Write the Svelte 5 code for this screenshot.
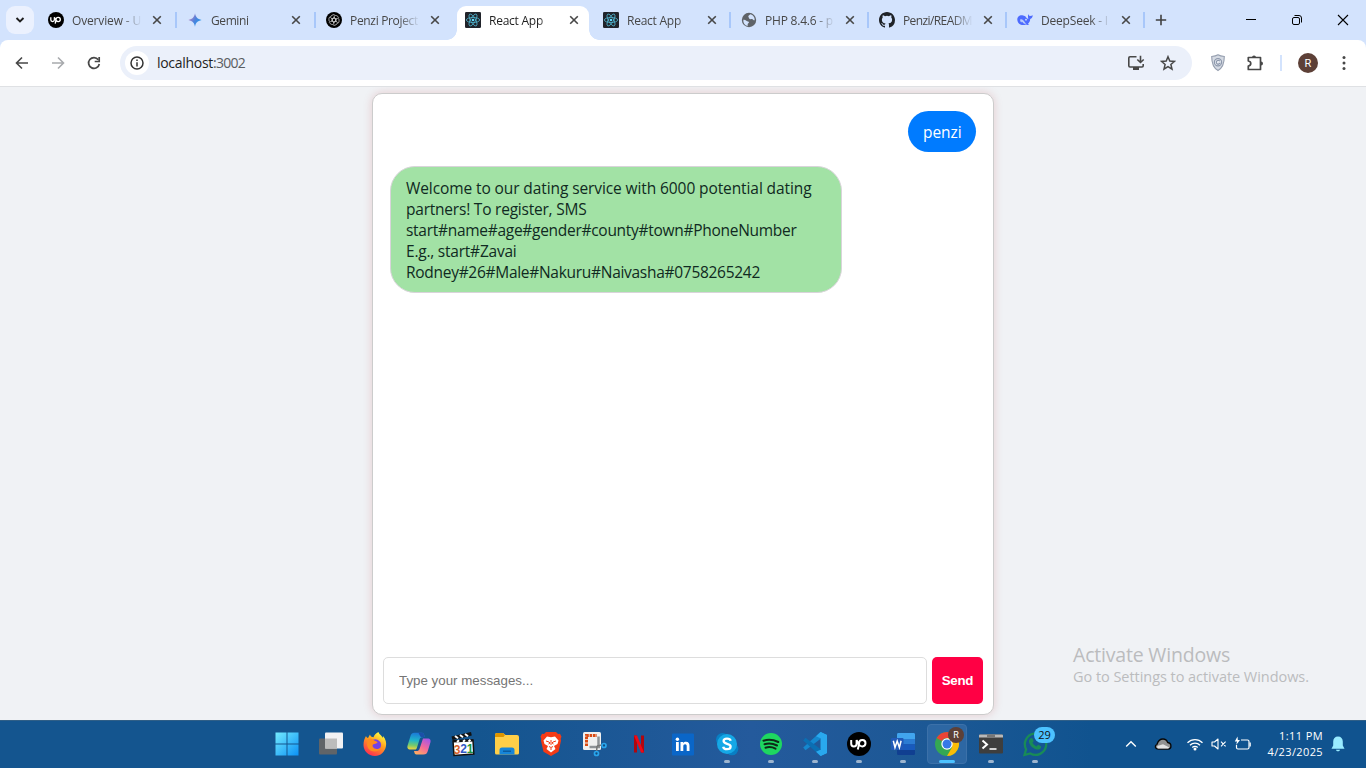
<script>
  const tabs = [
    { icon: 'up', title: 'Overview - U', w: 69 },
    { icon: 'gemini', title: 'Gemini', w: 37.5 },
    { icon: 'gpt', title: 'Penzi Project', w: 68 },
    { icon: 'react', title: 'React App', w: 54, active: true },
    { icon: 'react', title: 'React App', w: 54 },
    { icon: 'globe', title: 'PHP 8.4.6 - p', w: 68 },
    { icon: 'github', title: 'Penzi/READM', w: 69 },
    { icon: 'deepseek', title: 'DeepSeek - I', w: 67 }
  ];
  const lines = [
    ['Welcome to our dating service with 6000 potential dating', 405.5],
    ['partners! To register, SMS', 180.5],
    ['start#name#age#gender#county#town#PhoneNumber', 390.5],
    ['E.g., start#Zavai', 110.5],
    ['Rodney#26#Male#Nakuru#Naivasha#0758265242', 354]
  ];
  const apps = [
    { icon: 'start' }, { icon: 'tasks' }, { icon: 'firefox' }, { icon: 'copilot' }, { icon: 'mpc' },
    { icon: 'folder' }, { icon: 'brave' }, { icon: 'snip' }, { icon: 'netflix' }, { icon: 'linkedin' },
    { icon: 'skype', open: true }, { icon: 'spotify', open: true }, { icon: 'vscode', open: true },
    { icon: 'up', open: true }, { icon: 'word', open: true }, { icon: 'chrome', open: true, active: true },
    { icon: 'terminal', open: true }, { icon: 'whatsapp', open: true }
  ];

  // Spaces the letters of a single line so that it fills the given width.
  function fit(node, width) {
    const apply = () => {
      node.style.letterSpacing = '0px';
      const n = node.textContent.length;
      node.style.letterSpacing = (width - node.getBoundingClientRect().width) / n + 'px';
    };
    apply();
    document.fonts.ready.then(apply);
  }
</script>

{#snippet glyph(name, size)}
  <svg class="glyph" width={size} height={size} viewBox="0 0 24 24">
    {#if name === 'up'}
      <circle cx="12" cy="12" r="12" fill="#000" />
      <path d="M4.200 8v3.800a2.700 2.700 0 0 0 5.400 0V8c1 2.800 2.700 6.400 5.600 6.400a3.200 3.200 0 1 0-3.100-3.400c0 2-1 4.500-1.300 6.500" fill="none" stroke="#fff" stroke-width="2" />
    {:else if name === 'gemini'}
      <defs><linearGradient id="gem" x1="0" x2="1" y1=".2" y2=".8"><stop offset=".1" stop-color="#b884c4" /><stop offset=".5" stop-color="#4c82dc" /><stop offset="1" stop-color="#1ba1f0" /></linearGradient></defs>
      <path d="M12 2c1.200 6 3.500 8.500 10 10-6.500 1.500-8.800 4-10 10-1.200-6-3.500-8.500-10-10C8.500 10.500 10.800 8 12 2z" fill="url(#gem)" />
    {:else if name === 'gpt'}
      <circle cx="12" cy="12" r="12" fill="#000" />
      <g fill="none" stroke="#ddd" stroke-width="1.2">
        {#each [0, 60, 120, 180, 240, 300] as a}
          <path d="M12 8.300V6.500a3 3 0 0 1 5-2l2 1.200a3 3 0 0 1 1 3.200M12 8.300l3.300 1.900v5" transform="rotate({a} 12 12) translate(1.700 1.900) scale(.86)" />
        {/each}
      </g>
    {:else if name === 'react'}
      <rect width="24" height="24" rx="2" fill="#20232a" />
      <g fill="none" stroke="#4fb3cc" stroke-width="1.2">
        <ellipse cx="12" cy="12" rx="10" ry="3.800" />
        <ellipse cx="12" cy="12" rx="10" ry="3.800" transform="rotate(60 12 12)" />
        <ellipse cx="12" cy="12" rx="10" ry="3.800" transform="rotate(120 12 12)" />
      </g>
      <circle cx="12" cy="12" r="2" fill="#61dafb" />
    {:else if name === 'globe'}
      <circle cx="12" cy="12" r="10.800" fill="#5f6368" />
      <path d="M3.500 11.500c2 0 3 .5 4.500 1.500s4 1 4 2.500-2 1.500-2 3v2.500A9 9 0 0 1 3.500 11.500zM14 3.500c-1 1.500-3 1.500-3 3s1 2 1 3 2 1.500 4 1 2 2 4.500 2A9 9 0 0 0 14 3.500z" fill="#d3e3fd" />
    {:else if name === 'github'}
      <path fill="#1f2328" d="M12 0C5.370 0 0 5.370 0 12c0 5.300 3.440 9.800 8.210 11.390.6.110.79-.26.79-.58v-2.230c-3.340.73-4.030-1.420-4.030-1.420-.55-1.390-1.330-1.760-1.330-1.760-1.090-.74.080-.73.080-.73 1.210.09 1.840 1.240 1.840 1.240 1.070 1.830 2.810 1.300 3.490 1 .11-.78.420-1.310.76-1.610-2.670-.3-5.470-1.330-5.470-5.930 0-1.310.47-2.380 1.240-3.220-.13-.3-.54-1.520.11-3.180 0 0 1.010-.32 3.300 1.230a11.500 11.500 0 0 1 6 0c2.300-1.550 3.300-1.230 3.300-1.230.66 1.660.250 2.880.12 3.180.77.84 1.230 1.910 1.230 3.220 0 4.610-2.800 5.620-5.480 5.920.43.370.82 1.100.82 2.220v3.290c0 .32.190.69.800.58A12 12 0 0 0 24 12C24 5.370 18.630 0 12 0z" />
    {:else if name === 'deepseek'}
      <path d="M.500 12C0 7 4 4.500 8 5c2 .3 3 1.300 4.500 1.500 1.200 2 2 3 4.500 4-.8-3-.5-5.500-.3-7.500 1 2.500 2 3 3.300 3 1.500 0 2-.8 3.700-1-.2 3-1.700 5-3.900 5.500 0 4-2 6-3.300 7 .5.800 1.500.7 2 1-2 1.700-4 .8-5 .2C7 21 1 18 .5 12z" fill="#4d6bfe" />
      <path d="M5 11c3-1 5 1.500 6.500 4 1 1.500 2 2 2.500 2.500-4 1-5-2-6.500-3-.8 0-1 .8-.4 1.600C5 15 4.300 13 5 11z" fill="#b9cdfc" />
      <circle cx="13.500" cy="11.500" r="1.300" fill="#d3e3fd" />
    {:else if name === 'start'}
      <defs><linearGradient id="win" x1="0" x2="1" y1="0" y2="1"><stop stop-color="#73eaff" /><stop offset="1" stop-color="#0b91f5" /></linearGradient></defs>
      <path d="M.500.500h11v11H.500zM12.500.500h11v11h-11zM.500 12.500h11v11H.500zM12.500 12.500h11v11h-11z" fill="url(#win)" />
    {:else if name === 'tasks'}
      <rect y="6.500" width="18" height="16" rx="1" fill="#606468" />
      <rect x="6" y=".5" width="18" height="16" rx="1" fill="#f1f1f3" />
      <path d="M6 6.500h12v10H6z" fill="#bcbcbc" />
    {:else if name === 'firefox'}
      <defs><linearGradient id="ff" x1=".8" x2=".25" y1="0" y2="1"><stop offset=".1" stop-color="#fff23c" /><stop offset=".45" stop-color="#ff9d1c" /><stop offset="1" stop-color="#ff2855" /></linearGradient></defs>
      <path d="M3 4c.3 1.300 1 1.500 2 2l2-3.500c.5 2 1.500 2.500 3.500 2.800C11 3 13 1 15.500 0c.5 2.500 3 3 4.500 6V4c3 3.500 3.500 7 3 10-1 6-5.500 10-11 10C5 24 .5 18.500.500 13c0-4 1.200-7 2.500-9z" fill="url(#ff)" />
      <circle cx="12.300" cy="13" r="5.800" fill="#7542e5" />
      <path d="M5 7c2-1.500 5 0 7 2 1.500.5 2.500.8 2.500 1.500-1 1.500-3 1-4.500 2-1 1.200-.3 3 1.500 4 3 1.200 4-.3 6-.3-1 2.300-3 3.300-6 3.300C7 19.500 4 16 4 12z" fill="#ff8b20" />
    {:else if name === 'copilot'}
      <defs>
        <linearGradient id="co1" x1=".4" x2=".3" y1="0" y2="1"><stop stop-color="#1b79d8" /><stop offset=".45" stop-color="#20b6c9" /><stop offset=".75" stop-color="#76ca6c" /><stop offset="1" stop-color="#f3d53c" /></linearGradient>
        <linearGradient id="co2" x1=".8" x2=".2" y1="0" y2="1"><stop stop-color="#a456e8" /><stop offset=".5" stop-color="#f2699b" /><stop offset="1" stop-color="#ffad60" /></linearGradient>
      </defs>
      <path d="M16 6.500h4.500c3 0 3.500 2 2.900 4l-2.600 8.500c-.7 2.500-1.700 3.500-4.500 3.500H9.500c-1.500 0-2-1-2.500-3.500h2.500c1.500 0 2.500-.5 3-2z" fill="url(#co2)" />
      <path d="M8 17.500H3.500c-3 0-3.500-2-2.900-4L3.200 5C4 2 5 .8 7.500.8H15c1.500 0 2 1 2.500 4L15 5.500c-1.500 0-2 .5-2.500 2L10 15.500c-.5 1.500-.8 2-2 2z" fill="url(#co1)" />
      <path d="M11.500.8H15c1.500 0 2 1 2.500 4L15 5.500c-1.500 0-2-1.500-3.500-4.700z" fill="#1c4fa8" />
    {:else if name === 'mpc'}
      <path d="M2 9l20-1 .8 14L3 23.500z" fill="#fff" stroke="#111" stroke-width="1.500" />
      <path d="M.500 4.500L20 0l.8 3.500L1.500 8zM2 8l20-.8.2 2.300L2 10.500z" fill="#111" />
      <path d="M4 4l3 2.300M9 3l3 2.300M14 2l3 2.200M6 10l2-1.700M12 9.700l2-1.700M17.500 9.500l2-1.700" stroke="#fff" stroke-width="2" />
      <text class="num" x="2.800" y="21.500" fill="#d9622b">3</text><text class="num" x="9.200" y="21.200" fill="#3158c5">2</text><text class="num" x="15.700" y="20.900" fill="#1d963a">1</text>
    {:else if name === 'folder'}
      <path d="M0 3a2 2 0 0 1 2-2h6l2.500 2H22a2 2 0 0 1 2 2v16a1.500 1.500 0 0 1-1.500 1.500h-21A1.500 1.500 0 0 1 0 21z" fill="#ffcf48" />
      <path d="M0 5V3a2 2 0 0 1 2-2h6l2 2-1.500 2z" fill="#dd9500" />
      <path d="M4.500 22.500V18a2.500 2.500 0 0 1 2.500-2.500h10a2.500 2.500 0 0 1 2.500 2.500v4.500z" fill="#1685d8" />
      <path d="M8 18.500h8v1.500H8z" fill="#0b5b9f" />
    {:else if name === 'brave'}
      <path d="M7 0h10l2 2 2-.3 1.500 3-.8 2 .3 2-2.500 11L12 24l-7.500-4.300L2 8.700l.3-2-.8-2L3 1.700 5 2z" fill="#f43b16" />
      <path d="M8 4.500l4 .8 4-.8 3.500 4-1 3.500-3.500 2 1.500 3-4.500 3.500L7.500 17 9 14l-3.500-2-1-3.500z" fill="#fff" />
      <path d="M7 9l3 1 1 1-1.500 1M17 9l-3 1-1 1 1.500 1M12 8v5m-2 1.500l2 1 2-1M12 16v2" stroke="#f43b16" stroke-width="1" fill="none" />
    {:else if name === 'snip'}
      <rect x="0" y="0" width="18" height="18" rx="1.500" fill="#f0f0f0" />
      <path d="M3.500 14V3.500H14" fill="none" stroke="#d84a13" stroke-width="3" stroke-dasharray="2.600 .8" />
      <path d="M15.500 4.500V15M6.500 15H17" stroke="#8e9296" stroke-width="2.500" />
      <path d="M14 14l7-1.500M14 14l-.5 7" stroke="#777" stroke-width="1.500" />
      <circle cx="21" cy="13.500" r="2" fill="#124d83" stroke="#28a4ec" stroke-width="1.700" /><circle cx="13.500" cy="21.500" r="2" fill="#124d83" stroke="#28a4ec" stroke-width="1.700" />
    {:else if name === 'netflix'}
      <path d="M7 3.500h3v17H7zM14 3.500h3v17h-3z" fill="#b0070f" /><path d="M7 3.500h3l7 17h-3z" fill="#ef0915" />
    {:else if name === 'linkedin'}
      <rect x="1" y="1.500" width="22" height="22" rx="1" fill="#0a66c8" />
      <path d="M5 10h2.800v9H5zM9.500 10h2.700v1.200c.6-1 1.500-1.400 2.700-1.400 2.800 0 3.600 1.700 3.600 4.200v5h-2.800v-4.500c0-1.200-.2-2.200-1.500-2.200s-1.900.9-1.900 2.200V19H9.500z" fill="#fff" /><circle cx="6.400" cy="7.300" r="1.700" fill="#fff" />
    {:else if name === 'skype'}
      <circle cx="7.500" cy="7.500" r="6.500" fill="#087fc4" /><circle cx="17" cy="17" r="6.300" fill="#087fc4" /><circle cx="12" cy="12" r="10" fill="#15a8e6" />
      <path d="M15.700 8.800c-.4-1.600-2-2.200-3.700-2.200-2 0-3.400 1-3.400 2.500 0 3.600 7 1.800 7 5.400 0 1.700-1.500 2.700-3.600 2.700-2 0-3.500-.8-3.800-2.500" fill="none" stroke="#fff" stroke-width="2.300" />
    {:else if name === 'spotify'}
      <circle cx="12" cy="12" r="11" fill="#1ed760" />
      <path d="M4.500 8.700c4.500-1.500 10-1 14.800 1.300M5.500 12.300c4-1.200 8.600-.7 12.500 1.200M6.500 15.700c3.300-1 7-.6 10 1" fill="none" stroke="#0e2a18" stroke-width="2" stroke-linecap="round" />
    {:else if name === 'vscode'}
      <path d="M17.500 0L24 3v18l-6.500 3z" fill="#29a8ee" /><path d="M17.500 0L.2 15.500l2.300 2.700L18 6.500z" fill="#1588cf" /><path d="M17.500 24L.2 8.500l2.300-2.700L18 17.500z" fill="#0b6fb3" /><path d="M17.500 0L13 4.200l5 2.300v11l-5 2.300 4.500 4.200L24 21V3z" fill="#29a8ee" />
    {:else if name === 'word'}
      <rect x="6" y="1" width="18" height="22" rx="1.300" fill="#103f91" /><path d="M6 2.300A1.300 1.300 0 0 1 7.300 1h15.400A1.300 1.300 0 0 1 24 2.300V7H6z" fill="#41a5ee" /><path d="M6 7h18v5.500H6z" fill="#2b7cd3" /><path d="M6 12.500h18V18H6z" fill="#185abd" />
      <rect y="6" width="12.500" height="12" rx="1" fill="#2059b8" /><path d="M2.300 8.700L4 15.500l2.200-6.500 2.200 6.500 1.700-6.800" fill="none" stroke="#fff" stroke-width="1.500" />
    {:else if name === 'chrome'}
      <circle cx="12" cy="12" r="12" fill="#34a853" /><path d="M12 6h10.400A12 12 0 0 1 12 24l5.200-9z" fill="#fbbc05" /><path d="M1.600 6A12 12 0 0 1 12 0a12 12 0 0 1 10.400 6H12a6 6 0 0 0-6 5.500z" fill="#ea4335" /><path d="M1.600 6l5.200 9 3-2-3-4z" fill="#34a853" />
      <circle cx="12" cy="12" r="5.700" fill="#fff" /><circle cx="12" cy="12" r="4.500" fill="#3679e8" />
    {:else if name === 'terminal'}
      <rect y="2.500" width="24" height="19" rx="1" fill="#3e3e3e" /><path d="M0 5.500v-2a1 1 0 0 1 1-1h22a1 1 0 0 1 1 1v2z" fill="#b9b9b9" /><path d="M8 2.500h8v3H8z" fill="#777" />
      <path d="M3.500 8.500l4.500 4-4.500 4" fill="none" stroke="#fff" stroke-width="2" /><path d="M10.500 17h7" stroke="#eee" stroke-width="1.700" />
    {:else if name === 'whatsapp'}
      <path d="M1.500 23l1.600-5.800A10.700 10.700 0 1 1 7.300 21.500z" fill="none" stroke="#198b57" stroke-width="2.300" /><path d="M7.500 6.500c1.500-1 2.200 0 3 2.300.3 1-.8 1.400-1 2 1 2 2.500 3 4 3.600.8-.3 1.200-2 2.200-1.500 2 1 2.800 1.300 2.300 2.600-1 2.500-3.600 2.500-6 1.500-3-1.300-4.800-3.600-5.800-6-.6-1.700-.2-3.500 1.300-4.500z" fill="#198b57" />
    {/if}
  </svg>
{/snippet}

<div class="screen">
  <header class="tabstrip">
    <button class="search" aria-label="Search tabs"><svg width="10" height="8" viewBox="0 0 10 8"><path d="M1.500 2L5 5.500 8.500 2" fill="none" stroke="#1f1f1f" stroke-width="1.900" /></svg></button>
    <div class="tabs">
      {#each tabs as tab, i}
        <div class="tab" class:active={tab.active} class:line={i > 0 && i !== 3 && i !== 4}>
          {@render glyph(tab.icon, 16)}
          <div class="title"><span use:fit={tab.w}>{tab.title}</span></div>
          <svg class="close" width="10" height="10" viewBox="0 0 10 10"><path d="M1.200 1.200l7.600 7.600M8.800 1.200L1.200 8.800" stroke="#474747" stroke-width="1.600" /></svg>
        </div>
      {/each}
    </div>
    <svg class="plus" width="12" height="12" viewBox="0 0 12 12"><path d="M6 .800v10.400M.800 6h10.400" stroke="#404040" stroke-width="1.600" /></svg>
    <div class="window">
      <svg width="12" height="12" viewBox="0 0 12 12"><path d="M1 5.500h10" stroke="#000" /></svg>
      <svg width="12" height="12" viewBox="0 0 12 12"><rect x="1.500" y="3.500" width="7" height="7" rx="1.500" fill="none" stroke="#000" /><path d="M3.500 1.500H8A2.500 2.500 0 0 1 10.500 4v4.500" fill="none" stroke="#000" /></svg>
      <svg width="12" height="12" viewBox="0 0 12 12"><path d="M1 1l10 10M11 1L1 11" stroke="#000" stroke-width="1.100" /></svg>
    </div>
  </header>

  <nav class="toolbar">
    <div class="nav">
      <svg width="16" height="16" viewBox="0 0 16 16"><path d="M14 8H3M8 2.500L2.500 8 8 13.500" fill="none" stroke="#474747" stroke-width="1.600" /></svg>
      <svg width="16" height="16" viewBox="0 0 16 16"><path d="M2 8h11M8 2.500L13.500 8 8 13.500" fill="none" stroke="#a8aaad" stroke-width="1.600" /></svg>
      <svg width="16" height="16" viewBox="0 0 16 16"><path d="M12.300 4.700A5.400 5.400 0 1 0 13.300 9" fill="none" stroke="#474747" stroke-width="1.700" /><path d="M13.200 2v4.500H8.700" fill="none" stroke="#474747" stroke-width="1.700" /></svg>
    </div>
    <div class="omnibox">
      <span class="info"><svg width="14" height="14" viewBox="0 0 14 14"><circle cx="7" cy="7" r="6" fill="none" stroke="#333" stroke-width="1.500" /><path d="M7 6.200v4.300M7 3.500v1.500" stroke="#333" stroke-width="1.500" /></svg></span>
      <div class="url"><span use:fit={56}>localhost</span><span class="port" use:fit={32}>:3002</span></div>
      <svg class="install" width="18" height="16" viewBox="0 0 18 16"><path d="M9.500 1.800H3a1.200 1.200 0 0 0-1.200 1.200v7.800A1.200 1.200 0 0 0 3 12h12a1.200 1.200 0 0 0 1.200-1.200V9" fill="none" stroke="#474747" stroke-width="1.600" /><path d="M6 12h6v3H6z" fill="#474747" /><path d="M13.500.8v6.500M10.300 4.500l3.200 3 3.200-3" fill="none" stroke="#474747" stroke-width="1.600" /></svg>
      <svg width="16" height="16" viewBox="0 0 16 16"><path d="M8 1.700l1.800 4.300 4.700.4-3.600 3.100 1.100 4.600L8 11.600l-4 2.500 1.100-4.600-3.600-3.100 4.700-.4z" fill="none" stroke="#474747" stroke-width="1.500" /></svg>
    </div>
    <div class="extras">
      <svg width="16" height="18" viewBox="0 0 16 18"><path d="M8 .800c2 1.200 4 1.500 6.300 1.700 0 6-.8 11-6.300 14C2.500 13.500 1.700 8.500 1.700 2.500 4 2.300 6 2 8 .800z" fill="#d5dae3" stroke="#969faf" stroke-width="1.100" /><circle cx="8" cy="8.300" r="3.600" fill="#eef1f6" stroke="#8d98ac" stroke-width="1.200" /><path d="M10 7.300A2 2 0 1 0 10 9.300H8.500" fill="none" stroke="#8d98ac" stroke-width="1.200" /></svg>
      <svg width="18" height="18" viewBox="0 0 18 18"><path d="M2.300 3.500h12.200v12H2.300V12c3.300-.5 3.300-4.500 0-5z" fill="none" stroke="#474747" stroke-width="1.700" stroke-linejoin="round" /><path d="M6 3.500a2 2 0 0 1 4 0zM15 7.500a2 2 0 0 1 0 4z" fill="#474747" /></svg>
      <i></i>
      <b>R</b>
      <svg width="4" height="16" viewBox="0 0 4 16"><g fill="#474747"><circle cx="2" cy="2.500" r="1.500" /><circle cx="2" cy="8" r="1.500" /><circle cx="2" cy="13.500" r="1.500" /></g></svg>
    </div>
  </nav>

  <main>
    <section class="chat">
      <div class="messages">
        <div class="bubble user"><span use:fit={38.5}>penzi</span></div>
        <div class="bubble bot">
          {#each lines as [text, width]}<div><span use:fit={width}>{text}</span></div>{/each}
        </div>
      </div>
      <form onsubmit={(e) => e.preventDefault()}>
        <input type="text" placeholder="Type your messages..." />
        <button><span use:fit={31.5}>Send</span></button>
      </form>
    </section>
    <aside class="watermark">
      <div class="big"><span use:fit={157}>Activate Windows</span></div>
      <div><span use:fit={236}>Go to Settings to activate Windows.</span></div>
    </aside>
  </main>

  <footer>
    <div class="apps">
      {#each apps as app}
        <div class="app" class:open={app.open} class:current={app.active}>
          {@render glyph(app.icon, 24)}
          {#if app.icon === 'chrome'}<span class="profile">R</span>{/if}
          {#if app.icon === 'whatsapp'}<span class="count">29</span>{/if}
        </div>
      {/each}
    </div>
    <div class="tray">
      <svg width="12" height="12" viewBox="0 0 12 12"><path d="M1.200 8.500L6 3.800l4.800 4.700" fill="none" stroke="#fff" stroke-width="1.400" /></svg>
      <svg class="cloud" width="18" height="14" viewBox="0 0 18 14"><path d="M4 12.200C1 12 .300 8.500 3 7.300 4 4 6 2 9 2c2.500 0 4 1.500 4.700 3.500C18 6 18 12 14 12.200z" fill="#929292" stroke="#080808" stroke-width="1.300" /><path d="M3.800 11.500C2.500 10.500 3 8.500 5 8.500l4-1.200 6 3c0 1-.5 1.200-1.500 1.200z" fill="#e4e4e4" /></svg>
      <svg class="wifi" width="18" height="14" viewBox="0 0 18 14"><g fill="none" stroke="#fff" stroke-width="1.300"><path d="M1.500 5.700a10.500 10.500 0 0 1 15 0M4 8.200a7 7 0 0 1 10 0M6.300 10.500a3.800 3.800 0 0 1 5.400 0" /></g><circle cx="9" cy="12" r="1.500" fill="#fff" /></svg>
      <svg class="sound" width="16" height="14" viewBox="0 0 16 14"><path d="M1 5v4h2.500L7 12V2L3.500 5zM10 4.700l4.600 4.600M14.600 4.700L10 9.300" fill="none" stroke="#fff" stroke-width="1.100" stroke-linejoin="round" /></svg>
      <svg class="battery" width="18" height="16" viewBox="0 0 18 16"><path d="M7 4h6.500A1.500 1.500 0 0 1 15 5.500v6a1.500 1.500 0 0 1-1.500 1.500H4a1.500 1.500 0 0 1-1.500-1.500V9" fill="none" stroke="#fff" stroke-width="1.200" /><path d="M15.500 6.500h1.300v4h-1.300zM3.500.500L.800 5.500H3L2.200 9 6 4H3.800z" fill="#fff" /></svg>
      <div class="clock"><div><span use:fit={44}>1:11 PM</span></div><div><span use:fit={55.500}>4/23/2025</span></div></div>
      <svg class="bell" width="14" height="16" viewBox="0 0 14 16"><path d="M7 .500c3 0 4.800 2 4.800 5v4l1.700 3.300H.500L2.200 9.500v-4c0-3 1.800-5 4.800-5zM5 13.700h4c-.5 2-3.500 2-4 0z" fill="#99ebff" /></svg>
    </div>
  </footer>
</div>

<style>
  :global(body) { margin: 0; overflow: hidden; }
  * { box-sizing: border-box; }
  svg { display: block; flex: none; }
  span { white-space: nowrap; }
  .screen { width: 1366px; height: 768px; display: flex; flex-direction: column; font-family: "Open Sans", "Noto Sans", sans-serif; background: #f0f2f5; }

  .tabstrip { height: 40px; flex: none; display: flex; align-items: center; background: #d3e3fd; padding-left: 6px; }
  .search { width: 28px; height: 28px; border: 0; padding: 0; border-radius: 9px; background: #ebf1fe; display: grid; place-items: center; }
  .tabs { display: flex; margin-left: 6px; align-self: stretch; }
  .tab { width: 138px; display: flex; align-items: center; padding-left: 8px; position: relative; }
  .tab:nth-child(-n+3) { width: 139px; }
  .tab.line::before { content: ""; position: absolute; left: -4px; top: 12px; width: 2px; height: 16px; background: #a8c7fa; }
  .tab:last-child::after { content: ""; position: absolute; right: 2px; top: 12px; width: 2px; height: 16px; background: #a8c7fa; }
  .tab > :global(*) { z-index: 1; }
  .tab.active::before { content: ""; position: absolute; left: 0; top: 6px; width: 132px; height: 34px; border-radius: 9px 9px 0 0; background: #fff; z-index: 0; }
  .tab.active::after { content: ""; position: absolute; left: -10px; bottom: 0; width: 152px; height: 10px; z-index: 0;
    background: radial-gradient(circle at 0 0, transparent 9.500px, #fff 10px) left / 10px 10px no-repeat, radial-gradient(circle at 100% 0, transparent 9.500px, #fff 10px) right / 10px 10px no-repeat; }
  .title { width: 70px; margin-left: 8px; overflow: hidden; font-size: 12px; line-height: 20px; color: #474747; mask-image: linear-gradient(90deg, #000 70%, transparent 100%); padding-top: 2px; }
  .active .title { color: #1f1f1f; }
  .close { margin-left: 10px; }
  .plus { margin-left: 8px; }
  .window { display: flex; gap: 34px; margin-left: auto; padding-right: 17px; }

  .toolbar { height: 47px; flex: none; display: flex; align-items: center; background: linear-gradient(#d3e3fd, #d3e3fd) top / 100% 10px no-repeat, #fff; border-bottom: 1px solid #dfe1e4; position: relative; isolation: isolate; }
  .toolbar::before { content: ""; position: absolute; inset: 0; background: #fff; border-radius: 8px 8px 0 0; z-index: -1; }
  .nav { display: flex; gap: 20px; padding-left: 14px; width: 120px; }
  .omnibox { width: 1072px; height: 34px; border-radius: 17px; background: #ebf0fa; display: flex; align-items: center; padding: 0 16px 0 5px; }
  .info { width: 24px; height: 24px; border-radius: 50%; background: #fff; display: grid; place-items: center; }
  .url { flex: 1; margin-left: 8px; font-size: 14px; color: #1f1f1f; line-height: 20px; }
  .port { color: #5a5d61; }
  .install { margin-right: 15px; }
  .extras { flex: 1; display: flex; align-items: center; padding-left: 18px; }
  .extras svg:nth-child(2) { margin-left: 20px; }
  .extras i { width: 2px; height: 16px; background: #d3e3fd; margin-left: 16px; }
  .extras b { width: 20px; height: 20px; border-radius: 50%; background: #5d4037; color: #fff; display: grid; place-items: center; font: 11px Roboto, sans-serif; margin-left: 16px; }
  .extras svg:last-child { margin-left: 24px; }

  main { flex: 1; display: grid; justify-content: center; padding-top: 6px; position: relative; overflow: hidden; }
  .chat { width: 622px; height: 622px; border: 1px solid #ccc; border-radius: 10px; background: #fff; box-shadow: 0 0 10px rgba(180, 20, 20, .17); display: flex; flex-direction: column; }
  .messages { flex: 1; display: flex; flex-direction: column; align-items: flex-start; gap: 14px; padding: 17px; }
  .bubble { font-size: 15.500px; line-height: 21px; padding: 11px 15px 9px; border-radius: 25px; }
  .user { align-self: flex-end; width: 68px; background: #007bff; color: #fff; border-radius: 21px; }
  .bot { width: 452px; border: 1px solid #d9d4da; background: #a2e2a5; color: #102a22; }
  form { display: flex; gap: 5px; padding: 10px; }
  input { flex: 1; height: 47px; border: 1px solid #ddd; border-radius: 5px; padding: 0 15px; font: 13.333px "Liberation Sans", sans-serif; }
  input::placeholder { color: #757575; }
  form button { width: 51px; border: 0; border-radius: 5px; padding: 0; background: #ff0044; color: #fff; font: bold 13.333px "Liberation Sans", sans-serif; }
  .watermark { position: absolute; left: 1073px; top: 555px; color: #bbbcbe; font-size: 14.500px; line-height: 20px; }
  .watermark .big { font-size: 19.500px; line-height: 25px; }

  footer { height: 48px; flex: none; display: flex; align-items: flex-start; background: linear-gradient(90deg, #14558f 0, #14558f 35%, #245a9c 55%, #1c5895 68%, #10538f 80%); border-top: 1px solid #305f87; padding-left: 265px; }
  .apps { display: grid; grid-template-columns: repeat(18, 44px); }
  .app { height: 46px; display: grid; place-items: center; position: relative; }
  .app > :global(.glyph) { z-index: 1; overflow: visible; }
  .app.open::after { content: ""; position: absolute; bottom: 4px; left: 19px; width: 6px; height: 3px; border-radius: 2px; background: #9db5cf; }
  .app.current::before { content: ""; position: absolute; inset: 3px 2px; border: 1px solid #3c71a9; border-radius: 4px; background: #2d67a3; }
  .app.current::after { left: 14px; width: 16px; background: #4cc2ff; }
  .profile { position: absolute; z-index: 2; right: 5px; top: 6px; width: 16px; height: 16px; border-radius: 50%; background: #5d4037; color: #fff; font: 9px/16px Roboto, sans-serif; text-align: center; }
  .count { position: absolute; z-index: 2; left: 21px; top: 6px; width: 21px; height: 16px; border-radius: 8px; background: #4cc2ff; color: #111; font-size: 11px; line-height: 16px; text-align: center; }
  .num { font: bold 12px "Liberation Sans", sans-serif; }
  .tray { height: 46px; display: flex; align-items: center; flex: 1; padding-left: 68px; color: #fff; }
  .cloud { margin-left: 17px; }
  .wifi { margin-left: 14px; }
  .sound { margin-left: 7px; }
  .battery { margin-left: 7px; }
  .clock { width: 71px; text-align: right; font-size: 11px; line-height: 16px; }
  .bell { margin-left: 8px; }
</style>
